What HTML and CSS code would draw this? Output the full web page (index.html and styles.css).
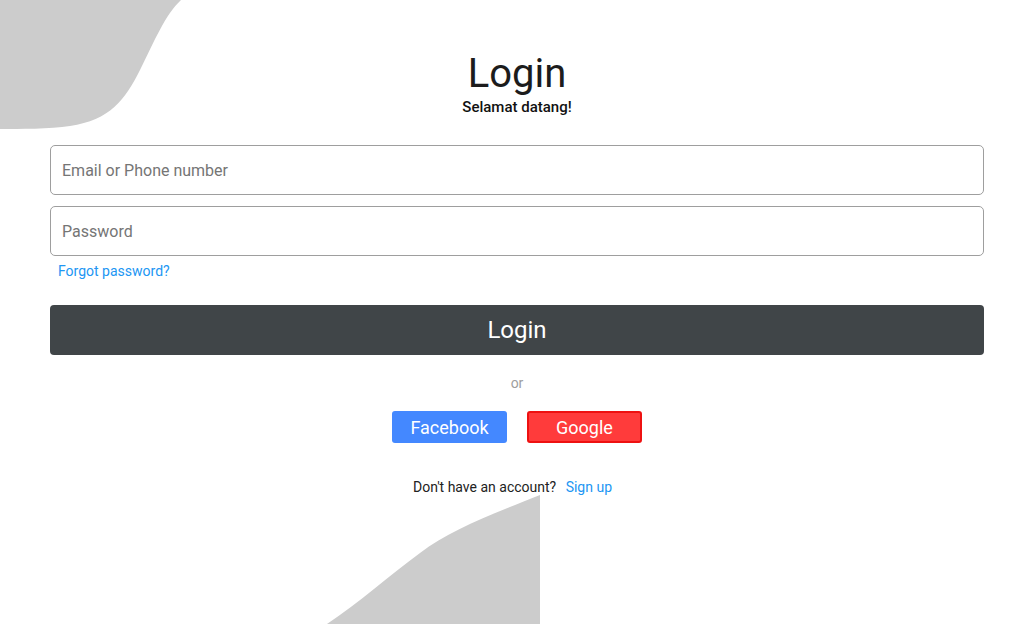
FILE: index.html
```html
<!DOCTYPE html>
<html lang="id">
<head>
<meta charset="utf-8">
<title>Login</title>
<link rel="stylesheet" href="styles.css">
</head>
<body>
<svg class="blob blob-top" width="182" height="130" viewBox="0 0 182 130" aria-hidden="true"><path d="M0 0 H181 C165 15 155 40 140 70 C125 100 110 120 70 126 C50 129 20 129 0 129 Z" fill="#cccccc"/></svg>
<svg class="blob blob-bottom" width="220" height="134" viewBox="0 0 220 134" aria-hidden="true"><path d="M7 134 C40 112 70 85 100 63 C130 40 170 25 220 5 V134 Z" fill="#cccccc"/></svg>
<main class="login">
  <header class="head">
    <h1 class="title">Login</h1>
    <p class="subtitle">Selamat datang!</p>
  </header>
  <form class="form">
    <input class="field" type="text" placeholder="Email or Phone number">
    <input class="field" type="password" placeholder="Password">
    <a class="forgot" href="#">Forgot password?</a>
    <button class="btn-login" type="button">Login</button>
  </form>
  <p class="or">or</p>
  <div class="social">
    <button class="btn-social fb" type="button">Facebook</button>
    <button class="btn-social google" type="button">Google</button>
  </div>
  <p class="signup">Don't have an account? <a href="#">Sign up</a></p>
</main>
</body>
</html>
```

FILE: styles.css
```css
* { box-sizing: border-box; }
html, body { margin: 0; padding: 0; }
body {
  background: #fff;
  font-family: Roboto, "Liberation Sans", Arial, sans-serif;
  color: #212121;
  width: 1034px;
  height: 624px;
  overflow: hidden;
  position: relative;
}
.blob { position: absolute; z-index: 0; }
.blob-top { left: 0; top: 0; }
.blob-bottom { left: 320px; top: 490px; }

.login {
  position: relative;
  z-index: 1;
  padding: 50px 50px 0;
  display: flex;
  flex-direction: column;
}
.head { text-align: center; }
.title {
  margin: 0;
  font-size: 40px;
  line-height: 48px;
  font-weight: 400;
  color: #1c1c1c;
}
.subtitle {
  margin: 0;
  font-size: 15px;
  line-height: 18px;
  font-weight: 500;
  color: #111;
}
.form {
  margin-top: 29px;
  display: flex;
  flex-direction: column;
}
.field {
  height: 50px;
  border: 1px solid #9e9e9e;
  border-radius: 5px;
  padding: 0 11px;
  font-family: inherit;
  font-size: 16px;
  color: #333;
  background: #fff;
  outline: none;
}
.field + .field { margin-top: 11px; }
.field::placeholder { color: #757575; }
.forgot {
  margin: 7px 0 0 8px;
  font-size: 14px;
  line-height: 17px;
  color: #2196f3;
  text-decoration: none;
  align-self: flex-start;
}
.btn-login {
  margin-top: 25px;
  height: 50px;
  border: none;
  border-radius: 4px;
  background: #404548;
  color: #fff;
  font-family: inherit;
  font-size: 24px;
  cursor: pointer;
}
.or {
  margin: 20px 0 0;
  text-align: center;
  font-size: 14px;
  line-height: 17px;
  color: #9e9e9e;
}
.social {
  margin-top: 19px;
  display: flex;
  justify-content: center;
  gap: 20px;
}
.btn-social {
  height: 32px;
  border-radius: 3px;
  color: #fff;
  font-family: inherit;
  font-size: 18px;
  font-weight: 400;
  cursor: pointer;
}
.fb {
  width: 115px;
  background: #4488ff;
  border: none;
}
.google {
  width: 115px;
  background: #ff3b3b;
  border: 2px solid #ee1111;
}
.signup {
  margin: 36px 0 0;
  text-align: center;
  font-size: 14px;
  line-height: 17px;
  color: #222;
}
.signup a {
  margin-left: 6px;
  margin-right: 9px;
  color: #2196f3;
  text-decoration: none;
}
```
